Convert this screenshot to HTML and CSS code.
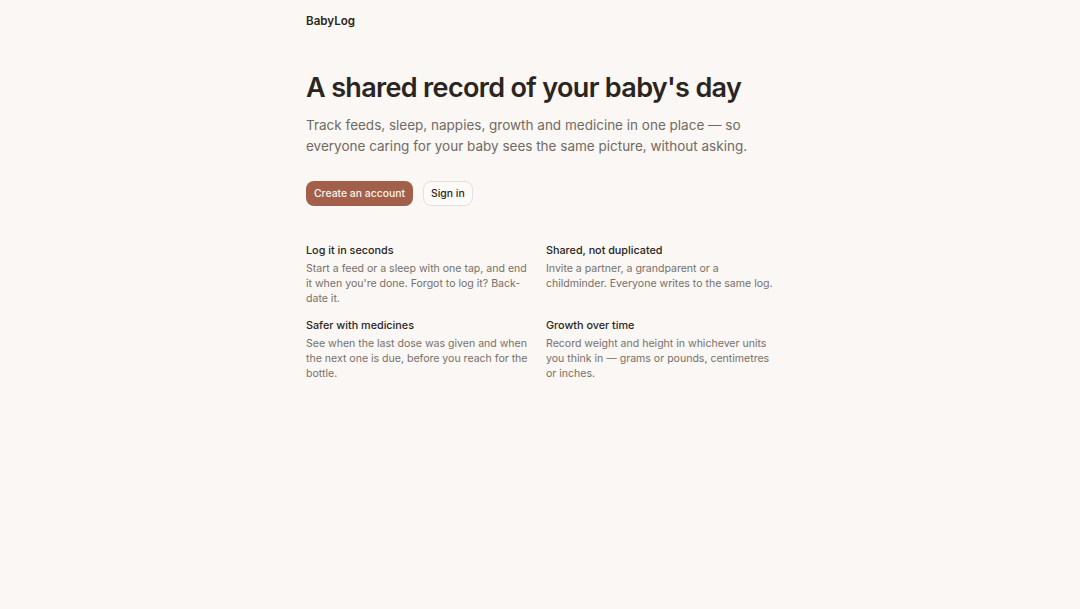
FILE: index.html
```html
<!DOCTYPE html>
<html lang="en">
<head>
<meta charset="utf-8">
<title>BabyLog</title>
<link rel="stylesheet" href="styles.css">
</head>
<body>
<div class="page">
  <header class="top">
    <span class="brand">BabyLog</span>
  </header>
  <main class="hero">
    <h1 class="title">A shared record of your baby's day</h1>
    <p class="lead">Track feeds, sleep, nappies, growth and medicine in one place — so everyone caring for your baby sees the same picture, without asking.</p>
    <div class="actions">
      <a class="btn btn-primary" href="#">Create an account</a>
      <a class="btn btn-ghost" href="#">Sign in</a>
    </div>
    <section class="features">
      <div class="feature">
        <h2 class="feature-title">Log it in seconds</h2>
        <p class="feature-text">Start a feed or a sleep with one tap, and end it when you're done. Forgot to log it? Back-date it.</p>
      </div>
      <div class="feature">
        <h2 class="feature-title">Shared, not duplicated</h2>
        <p class="feature-text">Invite a partner, a grandparent or a childminder. Everyone writes to the same log.</p>
      </div>
      <div class="feature">
        <h2 class="feature-title">Safer with medicines</h2>
        <p class="feature-text">See when the last dose was given and when the next one is due, before you reach for the bottle.</p>
      </div>
      <div class="feature">
        <h2 class="feature-title">Growth over time</h2>
        <p class="feature-text">Record weight and height in whichever units you think in — grams or pounds, centimetres or inches.</p>
      </div>
    </section>
  </main>
</div>
</body>
</html>
```

FILE: styles.css
```css
* { box-sizing: border-box; }
html, body { margin: 0; padding: 0; }
body {
  background: #faf7f4;
  font-family: Inter, "Noto Sans", sans-serif;
  color: #2a2521;
}
.page {
  width: 468px;
  margin: 0 auto;
}
.top {
  padding-top: 13px;
  height: 29px;
}
.brand {
  display: block;
  font-size: 11.6px;
  font-weight: 600;
  line-height: 16px;
  color: #2a2521;
}
.hero {
  padding-top: 42px;
}
.title {
  margin: 0;
  font-size: 27px;
  font-weight: 600;
  line-height: 34px;
  letter-spacing: -0.66px;
  color: #2a2521;
}
.lead {
  margin: 10px 0 0;
  font-size: 13.5px;
  line-height: 21px;
  color: #716a64;
}
.actions {
  display: flex;
  gap: 10px;
  margin-top: 24px;
}
.btn {
  display: inline-flex;
  align-items: center;
  height: 25px;
  padding: 0 7px;
  border-radius: 8px;
  font-size: 10.4px;
  font-weight: 500;
  text-decoration: none;
  border: 1px solid transparent;
}
.btn-primary {
  background: #a2604a;
  color: #fbf4ef;
}
.btn-ghost {
  background: #fdfbf9;
  color: #2a2521;
  border-color: #e6e0da;
}
.features {
  display: grid;
  grid-template-columns: 1fr 1fr;
  column-gap: 12px;
  row-gap: 12px;
  margin-top: 37px;
}
.feature-title {
  margin: 0;
  font-size: 10.8px;
  font-weight: 500;
  line-height: 16px;
  color: #2a2521;
}
.feature-text {
  margin: 2px 0 0;
  font-size: 10.55px;
  line-height: 15px;
  color: #77706a;
}
```
